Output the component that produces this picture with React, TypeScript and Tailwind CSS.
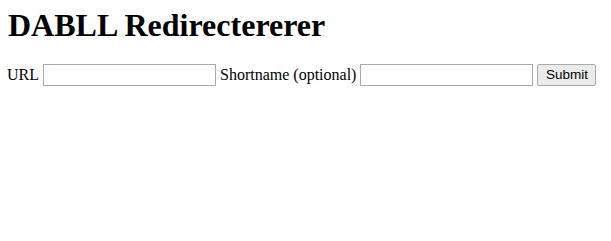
export default function App() {
  return (
    <div className="min-h-screen bg-white pl-[7px] pr-2 pt-[7px] font-['Liberation_Serif',serif] text-black">
      <h1 className="pl-px text-[32px] font-bold leading-[37px]">DABLL Redirectererer</h1>
      <form
        className="mt-[19px] flex items-center gap-1 text-base"
        onSubmit={(e) => e.preventDefault()}
      >
        <label htmlFor="url">URL</label>
        <input
          id="url"
          type="text"
          className="h-[22px] w-[173px] border border-[#a9a9a9] bg-white px-0.5 text-[13.33px] outline-none"
        />
        <label htmlFor="short">Shortname (optional)</label>
        <input
          id="short"
          type="text"
          className="h-[22px] w-[173px] border border-[#a9a9a9] bg-white px-0.5 text-[13.33px] outline-none"
        />
        <button
          type="submit"
          className="h-[22px] w-[59px] rounded-[2px] border border-[#a9a9a9] bg-[#ebebeb] font-['Liberation_Sans',sans-serif] text-[13.5px]"
        >
          Submit
        </button>
      </form>
    </div>
  );
}
